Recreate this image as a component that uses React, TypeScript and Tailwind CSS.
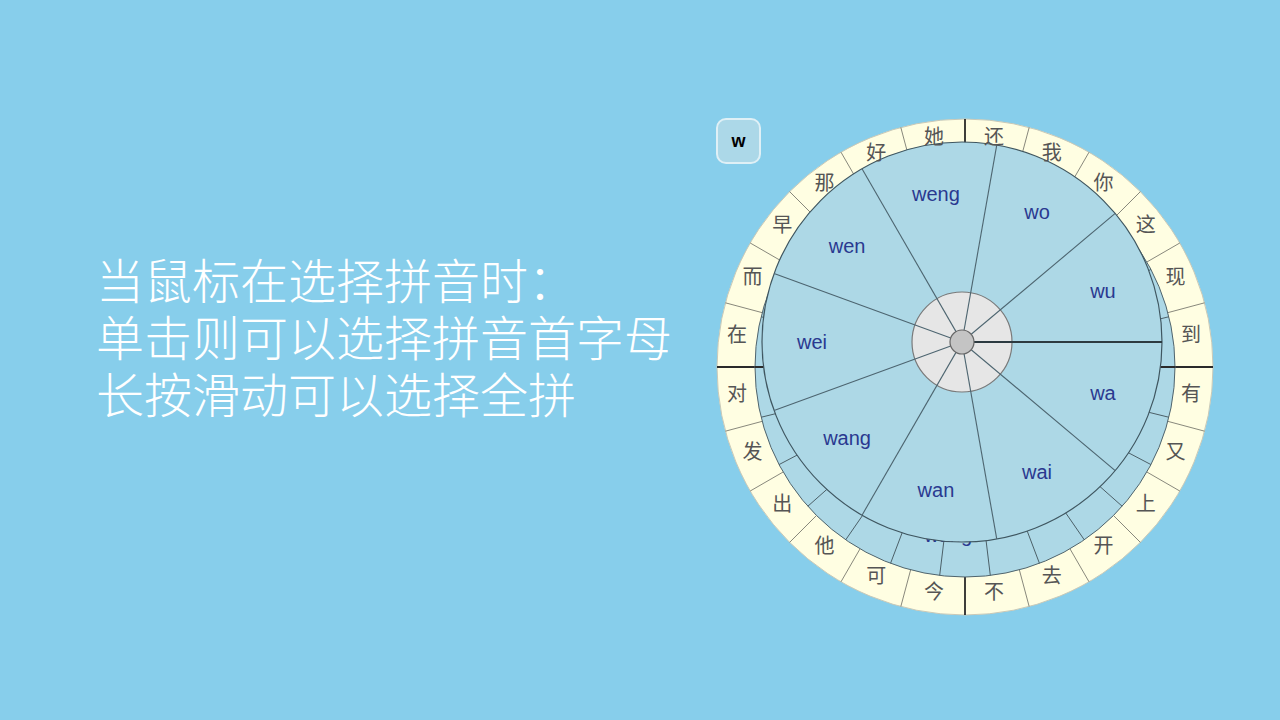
const OX = 965;
const OY = 367;
const PX = 962;
const PY = 342;

const ringChars = [
  "还", "我", "你", "这", "现", "到", "有", "又", "上", "开", "去", "不",
  "今", "可", "他", "出", "发", "对", "在", "而", "早", "那", "好", "她",
];

// sectors start at +x (clockwise, y down), 40deg each
const pinyin = ["wa", "wai", "wan", "wang", "wei", "wen", "weng", "wo", "wu"];

function pt(cx: number, cy: number, r: number, deg: number) {
  const a = (deg * Math.PI) / 180;
  return [cx + r * Math.cos(a), cy + r * Math.sin(a)];
}

function wedge(cx: number, cy: number, r: number, a1: number, a2: number) {
  const [x1, y1] = pt(cx, cy, r, a1);
  const [x2, y2] = pt(cx, cy, r, a2);
  return `M ${cx} ${cy} L ${x1} ${y1} A ${r} ${r} 0 0 1 ${x2} ${y2} Z`;
}

function Wheel() {
  return (
    <svg width={510} height={510} viewBox="710 110 510 510">
      {/* outer character ring */}
      <circle cx={OX} cy={OY} r={248} fill="#fffee2" stroke="#c9c9b8" strokeWidth={1} />
      {ringChars.map((_, i) => {
        const deg = -90 + 15 * i;
        const [x1, y1] = pt(OX, OY, 210, deg);
        const [x2, y2] = pt(OX, OY, 248, deg);
        const thick = i % 6 === 0;
        return (
          <line
            key={"rd" + i}
            x1={x1}
            y1={y1}
            x2={x2}
            y2={y2}
            stroke={thick ? "#2a2a2a" : "#7a7a70"}
            strokeWidth={thick ? 1.8 : 0.9}
          />
        );
      })}

      {/* hidden back layer */}
      <circle cx={OX} cy={OY} r={210} fill="#add8e6" stroke="#50646c" strokeWidth={1} />
      {Array.from({ length: 26 }).map((_, k) => {
        const deg = (k * 360) / 26;
        const [x1, y1] = pt(OX, OY, 150, deg);
        const [x2, y2] = pt(OX, OY, 210, deg);
        const thick = k === 0 || k === 13;
        return (
          <line
            key={"bd" + k}
            x1={x1}
            y1={y1}
            x2={x2}
            y2={y2}
            stroke={thick ? "#2a2a2a" : "#4c6068"}
            strokeWidth={thick ? 1.8 : 1}
          />
        );
      })}
      <text x={972} y={542} textAnchor="end" fontSize={20} fill="#2a3990" fontFamily="'Liberation Sans', Arial, sans-serif">
        wang
      </text>

      {/* pinyin disk */}
      {pinyin.map((p, i) => (
        <path key={"w" + p} d={wedge(PX, PY, 200, 40 * i, 40 * i + 40)} fill="#add8e6" />
      ))}
      <circle cx={PX} cy={PY} r={200} fill="none" stroke="#3f5660" strokeWidth={1.2} />
      <circle cx={PX} cy={PY} r={50} fill="#e6e6e6" stroke="#7a7a7a" strokeWidth={1.2} />
      {pinyin.map((p, i) => {
        const [x1, y1] = pt(PX, PY, 12, 40 * i);
        const [x2, y2] = pt(PX, PY, 200, 40 * i);
        const thick = i === 0;
        return (
          <line
            key={"pl" + p}
            x1={x1}
            y1={y1}
            x2={x2}
            y2={y2}
            stroke={thick ? "#2c3a40" : "#4d6570"}
            strokeWidth={thick ? 2 : 1.1}
          />
        );
      })}
      <circle cx={PX} cy={PY} r={12} fill="#c4c4c4" stroke="#666666" strokeWidth={1.2} />
      {pinyin.map((p, i) => {
        const [x, y] = pt(PX, PY, 150, 40 * i + 20);
        return (
          <text
            key={"pt" + p}
            x={x}
            y={y}
            textAnchor="middle"
            dominantBaseline="central"
            fontSize={20}
            fill="#2a3990"
            fontFamily="'Liberation Sans', Arial, sans-serif"
          >
            {p}
          </text>
        );
      })}

      {/* ring characters on top */}
      {ringChars.map((c, i) => {
        const [x, y] = pt(964, 363, 229, -90 + 7.5 + 15 * i);
        return (
          <text
            key={"rc" + i}
            x={x}
            y={y}
            textAnchor="middle"
            dominantBaseline="central"
            fontSize={20}
            fill="#555555"
            fontFamily="'Noto Sans CJK SC', sans-serif"
          >
            {c}
          </text>
        );
      })}
    </svg>
  );
}

export default function App() {
  return (
    <div className="flex w-[1280px] h-[720px] overflow-hidden bg-[#87ceeb]">
      <div className="w-[710px] shrink-0 pl-[96px] pt-[250px] text-white text-[48px] leading-[57px] font-light font-['Noto_Sans_CJK_SC',sans-serif]">
        <p>当鼠标在选择拼音时：</p>
        <p>单击则可以选择拼音首字母</p>
        <p>长按滑动可以选择全拼</p>
      </div>
      <div className="relative mt-[110px] w-[510px] h-[510px] shrink-0">
        <Wheel />
        <div className="absolute left-[6px] top-[8px] flex h-[46px] w-[45px] items-center justify-center rounded-[10px] border-2 border-[#dff0f6] bg-[#acd8e8] text-[18px] font-bold text-black font-['Liberation_Sans',sans-serif]">
          w
        </div>
      </div>
    </div>
  );
}
